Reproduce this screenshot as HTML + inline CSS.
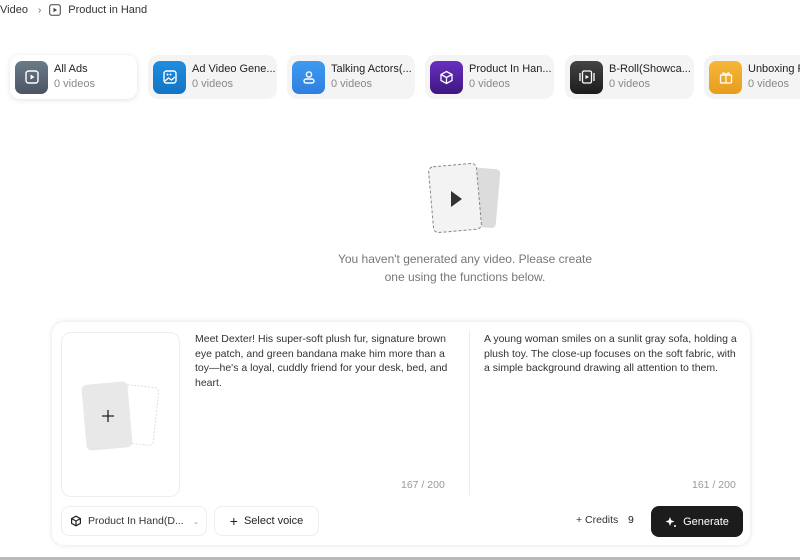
<!DOCTYPE html>
<html><head><style>
*{box-sizing:border-box;margin:0;padding:0}
body{width:800px;height:560px;overflow:hidden;background:#fff;font-family:"Liberation Sans",sans-serif;color:#222;position:relative}
.abs{position:absolute}
.tab{position:absolute;top:55px;height:44px;border-radius:10px;background:#f4f4f5;display:flex;align-items:center;padding-left:5px}
.tab.active{background:#fff;box-shadow:0 1px 6px rgba(0,0,0,.12)}
.ic{width:33px;height:33px;border-radius:7px;display:flex;align-items:center;justify-content:center;flex:none}
.tt{margin-left:6px;font-size:11px;line-height:15px;white-space:nowrap}
.tt b{font-weight:normal;color:#222;display:block}
.tt span{color:#888}
.desc{font-size:10.5px;line-height:14.5px;color:#333}
</style></head><body>
<div class="abs" style="left:0;top:4px;font-size:11px;color:#333;display:flex;align-items:center">
Video<span style="margin:0 8px 0 10px;color:#666;font-size:10px">›</span>
<svg width="12" height="12" viewBox="0 0 12 12"><rect x="0.7" y="0.7" width="10.6" height="10.6" rx="2" fill="none" stroke="#444" stroke-width="1"/><path d="M4.5 3.8L8 6 4.5 8.2Z" fill="#444"/></svg>
<span style="margin-left:7px">Product in Hand</span></div>

<div class="tab active" style="left:10px;width:127px"><div class="ic" style="background:linear-gradient(#6c7a8a,#4b5563)"><svg width="14" height="14" viewBox="0 0 14 14"><rect x="1" y="1" width="12" height="12" rx="2.5" fill="none" stroke="#fff" stroke-width="1.4"/><path d="M5.5 4.5L9.5 7 5.5 9.5Z" fill="#fff"/></svg></div><div class="tt"><b>All Ads</b><span>0 videos</span></div></div>
<div class="tab" style="left:148px;width:129px"><div class="ic" style="background:linear-gradient(#1f8ee0,#1473c4)"><svg width="14" height="14" viewBox="0 0 14 14"><rect x="1" y="1" width="12" height="12" rx="2.5" fill="none" stroke="#fff" stroke-width="1.4"/><path d="M2 11l3.5-3 3 2 3.5-3" fill="none" stroke="#fff" stroke-width="1.3"/><circle cx="4.5" cy="4.5" r="1" fill="#fff"/><circle cx="7.5" cy="4.5" r="1" fill="#fff"/></svg></div><div class="tt"><b>Ad Video Gene...</b><span>0 videos</span></div></div>
<div class="tab" style="left:287px;width:128px"><div class="ic" style="background:linear-gradient(#3d9bf0,#2f7fe0)"><svg width="14" height="14" viewBox="0 0 14 14"><circle cx="7" cy="4.5" r="2.6" fill="none" stroke="#fff" stroke-width="1.4"/><rect x="2" y="9" width="10" height="4" rx="2" fill="none" stroke="#fff" stroke-width="1.4"/></svg></div><div class="tt"><b>Talking Actors(...</b><span>0 videos</span></div></div>
<div class="tab" style="left:425px;width:129px"><div class="ic" style="background:linear-gradient(#6a2fc0,#3d1780)"><svg width="15" height="15" viewBox="0 0 15 15"><path d="M7.5 1.5L13 4.5v6L7.5 13.5 2 10.5v-6Z M2 4.5l5.5 3 5.5-3 M7.5 7.5v6" fill="none" stroke="#fff" stroke-width="1.3"/></svg></div><div class="tt"><b>Product In Han...</b><span>0 videos</span></div></div>
<div class="tab" style="left:565px;width:129px"><div class="ic" style="background:linear-gradient(#444,#1c1c1c)"><svg width="16" height="14" viewBox="0 0 16 14"><rect x="3.5" y="1" width="9" height="12" rx="1.5" fill="none" stroke="#fff" stroke-width="1.3"/><path d="M1 3v8M15 3v8" stroke="#fff" stroke-width="1.3"/><path d="M6.5 5L10 7 6.5 9Z" fill="#fff"/></svg></div><div class="tt"><b>B-Roll(Showca...</b><span>0 videos</span></div></div>
<div class="tab" style="left:704px;width:110px"><div class="ic" style="background:linear-gradient(#f5b73a,#e79d1c)"><svg width="14" height="14" viewBox="0 0 14 14"><rect x="1.5" y="5" width="11" height="8" rx="1" fill="none" stroke="#fff" stroke-width="1.3"/><path d="M1 5h12M7 5v8M7 5C5 2 3 2.5 4 4.5M7 5c2-3 4-2.5 3-.5" fill="none" stroke="#fff" stroke-width="1.2"/></svg></div><div class="tt"><b>Unboxing Pr</b><span>0 videos</span></div></div>

<svg class="abs" style="left:425px;top:162px" width="80" height="76" viewBox="0 0 80 76">
<rect x="40" y="6" width="33" height="59" rx="4" transform="rotate(5 56 36)" fill="#dcdcdc"/>
<rect x="6" y="3" width="48" height="66" rx="5" transform="rotate(-5 30 36)" fill="#f3f3f3" stroke="#888" stroke-width="1" stroke-dasharray="3 2"/>
<path d="M26 29L37 37 26 45Z" fill="#333"/></svg>
<div class="abs" style="left:330px;top:250px;width:270px;text-align:center;font-size:12px;line-height:18px;color:#777">You haven't generated any video. Please create one using the functions below.</div>

<div class="abs" style="left:52px;top:322px;width:698px;height:223px;border-radius:12px;background:#fff;box-shadow:0 0 6px rgba(0,0,0,.12)"></div>
<div class="abs" style="left:61px;top:332px;width:119px;height:165px;border-radius:10px;border:1px solid #eee;background:#fff"></div>
<svg class="abs" style="left:78px;top:378px" width="84" height="76" viewBox="0 0 84 76">
<rect x="42" y="8" width="36" height="58" rx="4" transform="rotate(6 60 37)" fill="#fff" stroke="#ddd" stroke-dasharray="2 1.5"/>
<rect x="6" y="5" width="46" height="66" rx="5" transform="rotate(-5 29 38)" fill="#e8e8e8"/>
<path d="M30 32v12M24 38h12" stroke="#222" stroke-width="1.3"/></svg>
<div class="abs desc" style="left:195px;top:332px;width:258px">Meet Dexter! His super-soft plush fur, signature brown eye patch, and green bandana make him more than a toy—he's a loyal, cuddly friend for your desk, bed, and heart.</div>
<div class="abs" style="left:401px;top:479px;font-size:10.5px;color:#999">167 / 200</div>
<div class="abs" style="left:469px;top:330px;width:1px;height:165px;background:#eee"></div>
<div class="abs desc" style="left:484px;top:332px;width:258px">A young woman smiles on a sunlit gray sofa, holding a plush toy. The close-up focuses on the soft fabric, with a simple background drawing all attention to them.</div>
<div class="abs" style="left:692px;top:479px;font-size:10.5px;color:#999">161 / 200</div>

<div class="abs" style="left:61px;top:506px;width:146px;height:30px;border-radius:8px;border:1px solid #eee;display:flex;align-items:center;padding-left:8px;font-size:10.5px;color:#333">
<svg width="12" height="12" viewBox="0 0 15 15"><path d="M7.5 1.5L13 4.5v6L7.5 13.5 2 10.5v-6Z M2 4.5l5.5 3 5.5-3 M7.5 7.5v6" fill="none" stroke="#222" stroke-width="1.5"/></svg>
<span style="margin-left:6px">Product In Hand(D...</span><span style="margin-left:9px;color:#aaa;font-size:8px">⌄</span></div>
<div class="abs" style="left:214px;top:506px;width:105px;height:30px;border-radius:8px;border:1px solid #eee;display:flex;align-items:center;justify-content:center;font-size:11px;color:#222"><span style="font-size:14px;margin-right:6px">+</span>Select voice</div>
<div class="abs" style="left:576px;top:514px;font-size:10.5px;color:#333">+ Credits</div>
<div class="abs" style="left:628px;top:514px;font-size:10.5px;color:#222">9</div>
<div class="abs" style="left:651px;top:506px;width:92px;height:31px;border-radius:8px;background:#1c1c1c;color:#fff;display:flex;align-items:center;justify-content:center;font-size:11px">
<svg width="12" height="12" viewBox="0 0 12 12"><path d="M5 1L6.2 4.3 9.5 5.5 6.2 6.7 5 10 3.8 6.7 0.5 5.5 3.8 4.3Z" fill="#fff"/><circle cx="10" cy="10" r="1" fill="#fff"/></svg><span style="margin-left:6px">Generate</span></div>
<div class="abs" style="left:0;top:557px;width:800px;height:3px;background:#bbb"></div>
</body></html>
